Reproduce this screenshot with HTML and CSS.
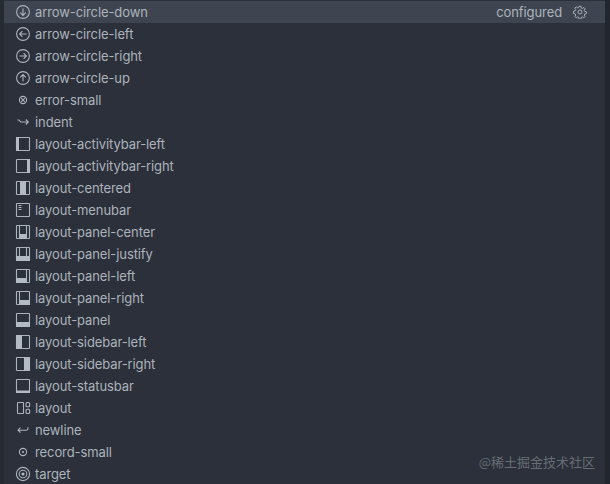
FILE: index.html
```html
<!DOCTYPE html>
<html lang="en">
<head>
    <meta charset="UTF-8">
    <title>Icons</title>
    <link rel="stylesheet" href="styles.css">
</head>
<body>
    <div class="list-panel">
        <ul class="icon-list">
            <li class="row active">
                <svg class="icon" viewBox="0 0 16 16"><circle cx="8" cy="8" r="6.4"/><path d="M8 4.4v7M5.2 8.6 8 11.4l2.8-2.8"/></svg>
                <span class="name">arrow-circle-down</span>
                <span class="detail">configured</span>
                <svg class="gear" viewBox="0 0 16 16"><path d="M6.9 1.5h2.2l.4 2 1.2.5 1.7-1.1 1.5 1.5-1.1 1.7.5 1.2 2 .4v2.2l-2 .4-.5 1.2 1.1 1.7-1.5 1.5-1.7-1.1-1.2.5-.4 2H6.9l-.4-2-1.2-.5-1.7 1.1-1.5-1.5 1.1-1.7-.5-1.2-2-.4V6.9l2-.4.5-1.2-1.1-1.7 1.5-1.5 1.7 1.1 1.2-.5z"/><circle cx="8" cy="8" r="2.3"/></svg>
            </li>
            <li class="row">
                <svg class="icon" viewBox="0 0 16 16"><circle cx="8" cy="8" r="6.4"/><path d="M11.6 8h-7M7.4 5.2 4.6 8l2.8 2.8"/></svg>
                <span class="name">arrow-circle-left</span>
            </li>
            <li class="row">
                <svg class="icon" viewBox="0 0 16 16"><circle cx="8" cy="8" r="6.4"/><path d="M4.4 8h7M8.6 5.2 11.4 8l-2.8 2.8"/></svg>
                <span class="name">arrow-circle-right</span>
            </li>
            <li class="row">
                <svg class="icon" viewBox="0 0 16 16"><circle cx="8" cy="8" r="6.4"/><path d="M8 11.6v-7M5.2 7.4 8 4.6l2.8 2.8"/></svg>
                <span class="name">arrow-circle-up</span>
            </li>
            <li class="row">
                <svg class="icon" viewBox="0 0 16 16"><circle cx="8" cy="8" r="3.6"/><path d="m6.2 6.2 3.6 3.6M9.8 6.2l-3.6 3.6"/></svg>
                <span class="name">error-small</span>
            </li>
            <li class="row">
                <svg class="icon" viewBox="0 0 16 16"><path d="M2.5 6h1.2c1 0 1.3 2 2.3 2h7.5M10.8 5.5 13.3 8l-2.5 2.5"/></svg>
                <span class="name">indent</span>
            </li>
            <li class="row">
                <svg class="icon" viewBox="0 0 16 16"><rect x="1.5" y="1.5" width="13" height="13" rx=".6"/><rect class="fill" x="1" y="1" width="3" height="14"/></svg>
                <span class="name">layout-activitybar-left</span>
            </li>
            <li class="row">
                <svg class="icon" viewBox="0 0 16 16"><rect x="1.5" y="1.5" width="13" height="13" rx=".6"/><rect class="fill" x="12" y="1" width="3" height="14"/></svg>
                <span class="name">layout-activitybar-right</span>
            </li>
            <li class="row">
                <svg class="icon" viewBox="0 0 16 16"><rect x="1.5" y="1.5" width="13" height="13" rx=".6"/><rect class="fill" x="5" y="1" width="6" height="14"/></svg>
                <span class="name">layout-centered</span>
            </li>
            <li class="row">
                <svg class="icon" viewBox="0 0 16 16"><rect x="1.5" y="1.5" width="13" height="13" rx=".6"/><path d="M3.5 3.5h3M3.5 5.5h3M3.5 7.5h3"/></svg>
                <span class="name">layout-menubar</span>
            </li>
            <li class="row">
                <svg class="icon" viewBox="0 0 16 16"><rect x="1.5" y="1.5" width="13" height="13" rx=".6"/><path d="M4.5 1.5v13M11.5 1.5v13"/><rect class="fill" x="4.5" y="10" width="7" height="5"/></svg>
                <span class="name">layout-panel-center</span>
            </li>
            <li class="row">
                <svg class="icon" viewBox="0 0 16 16"><rect x="1.5" y="1.5" width="13" height="13" rx=".6"/><path d="M4.5 1.5V10M11.5 1.5V10"/><rect class="fill" x="1" y="10" width="14" height="5"/></svg>
                <span class="name">layout-panel-justify</span>
            </li>
            <li class="row">
                <svg class="icon" viewBox="0 0 16 16"><rect x="1.5" y="1.5" width="13" height="13" rx=".6"/><path d="M11.5 1.5v13"/><rect class="fill" x="1" y="10" width="10.5" height="5"/></svg>
                <span class="name">layout-panel-left</span>
            </li>
            <li class="row">
                <svg class="icon" viewBox="0 0 16 16"><rect x="1.5" y="1.5" width="13" height="13" rx=".6"/><path d="M4.5 1.5v13"/><rect class="fill" x="4.5" y="10" width="10.5" height="5"/></svg>
                <span class="name">layout-panel-right</span>
            </li>
            <li class="row">
                <svg class="icon" viewBox="0 0 16 16"><rect x="1.5" y="1.5" width="13" height="13" rx=".6"/><rect class="fill" x="1" y="10" width="14" height="5"/></svg>
                <span class="name">layout-panel</span>
            </li>
            <li class="row">
                <svg class="icon" viewBox="0 0 16 16"><rect x="1.5" y="1.5" width="13" height="13" rx=".6"/><rect class="fill" x="1" y="1" width="6" height="14"/></svg>
                <span class="name">layout-sidebar-left</span>
            </li>
            <li class="row">
                <svg class="icon" viewBox="0 0 16 16"><rect x="1.5" y="1.5" width="13" height="13" rx=".6"/><rect class="fill" x="9" y="1" width="6" height="14"/></svg>
                <span class="name">layout-sidebar-right</span>
            </li>
            <li class="row">
                <svg class="icon" viewBox="0 0 16 16"><rect x="1.5" y="1.5" width="13" height="13" rx=".6"/><rect class="fill" x="1" y="12.5" width="14" height="2.5"/></svg>
                <span class="name">layout-statusbar</span>
            </li>
            <li class="row">
                <svg class="icon" viewBox="0 0 16 16"><rect x="2.5" y="2.5" width="6" height="11" rx=".6"/><rect x="11" y="2.5" width="3.6" height="4.2" rx="1"/><rect x="11" y="9.3" width="3.6" height="4.2" rx="1"/></svg>
                <span class="name">layout</span>
            </li>
            <li class="row">
                <svg class="icon" viewBox="0 0 16 16"><path d="M13 5.2v1.4c0 1-.6 1.6-1.6 1.6H3M5.5 5.7 3 8.2l2.5 2.5"/></svg>
                <span class="name">newline</span>
            </li>
            <li class="row">
                <svg class="icon" viewBox="0 0 16 16"><circle cx="8" cy="8" r="3.6"/><circle class="fill" cx="8" cy="8" r="1"/></svg>
                <span class="name">record-small</span>
            </li>
            <li class="row">
                <svg class="icon" viewBox="0 0 16 16"><circle cx="8" cy="8" r="6.6"/><circle cx="8" cy="8" r="3.8"/><circle class="fill" cx="8" cy="8" r="1.6"/></svg>
                <span class="name">target</span>
            </li>
        </ul>
        <div class="watermark">@稀土掘金技术社区</div>
    </div>
</body>
</html>
```

FILE: styles.css
```css
/* Icon picker list */
html, body {
    height: 100%;
}

body {
    margin: 0;
    background-color: #2b303a;
    color: #adb3bc;
    font-family: 'Inter', 'Liberation Sans', sans-serif;
    font-size: 13px;
    letter-spacing: -0.1px;
    overflow: hidden;
}

.list-panel {
    position: relative;
    height: 100%;
    box-sizing: border-box;
    border-left: 4px solid #262a33;
    border-right: 5px solid #22262e;
}

.icon-list {
    list-style: none;
    margin: 0;
    padding: 1px 0 0;
}

.row {
    display: flex;
    align-items: center;
    height: 22px;
    padding-left: 11px;
    padding-right: 18px;
}

.row.active {
    background-color: #3e4551;
}

.icon {
    width: 16px;
    height: 16px;
    margin-right: 4px;
    flex-shrink: 0;
    fill: none;
    stroke: #adb3bc;
    stroke-width: 1.1;
}

.icon .fill {
    fill: #b4bac3;
    stroke: none;
}

.name {
    flex: 1;
    white-space: nowrap;
}

.detail {
    margin-right: 11px;
}

.gear {
    width: 14px;
    height: 14px;
    fill: none;
    stroke: #adb3bc;
    stroke-width: 1.1;
}

/* sits over the list, bottom right */
.watermark {
    position: absolute;
    right: 10px;
    bottom: 13px;
    color: #686c74;
    font-family: 'Noto Sans CJK SC', sans-serif;
    font-size: 13px;
    letter-spacing: 0;
}
```
